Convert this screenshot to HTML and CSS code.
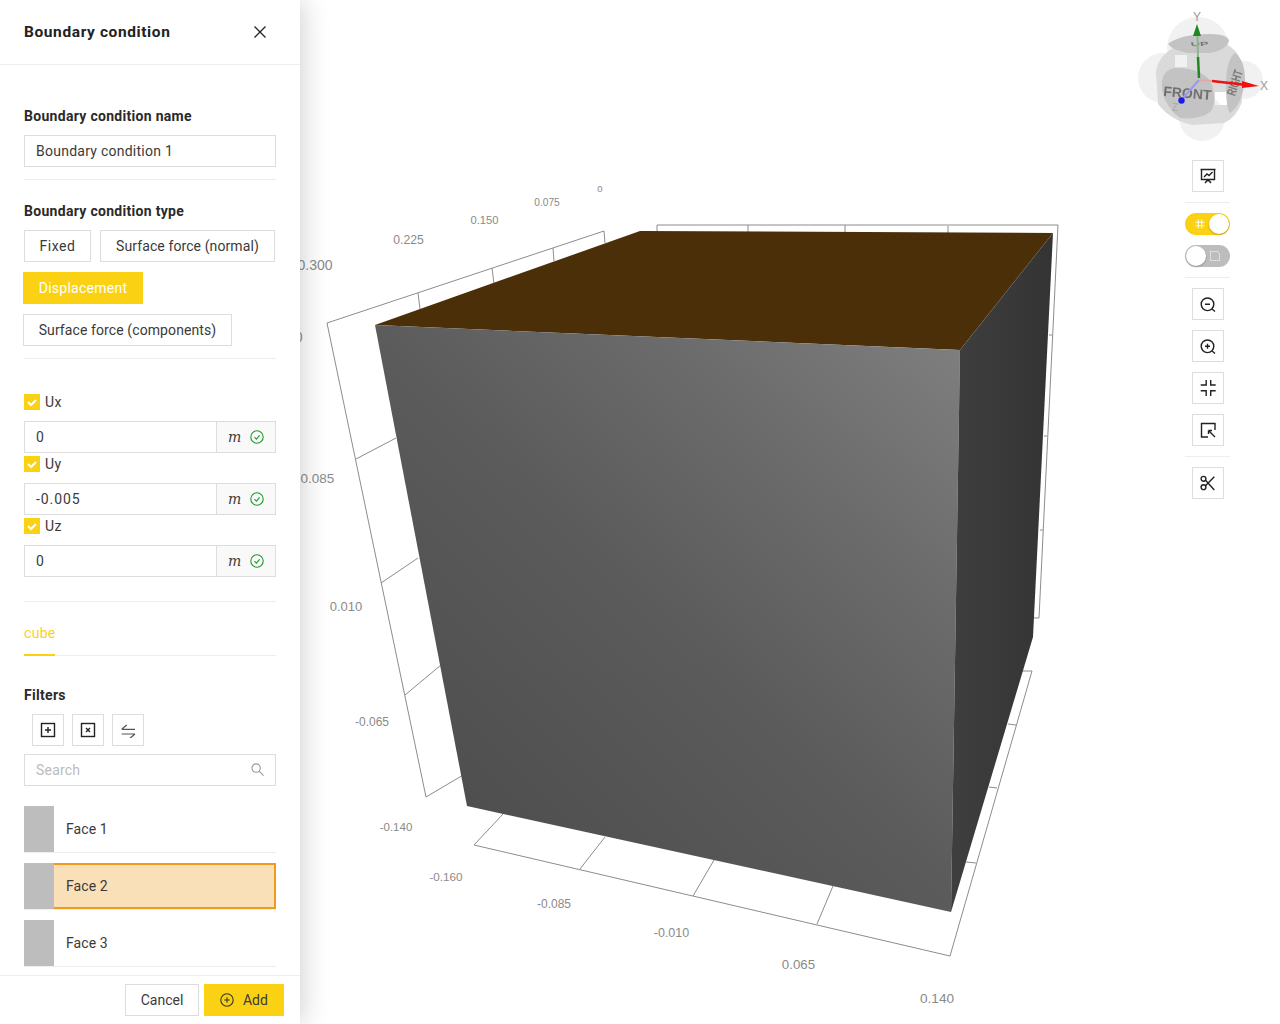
FILE: index.html
```html
<!DOCTYPE html>
<html lang="en">
<head>
  <meta charset="UTF-8">
  <meta name="viewport" content="width=device-width, initial-scale=1.0">
  <title>Boundary condition</title>
  <link rel="stylesheet" href="styles.css">
</head>
<body>
  <aside class="panel">
    <header class="panel-header">
      <h1>Boundary condition</h1>
      <svg class="close-icon" viewBox="0 0 12 12"><path d="M.5.5l11 11M11.500.5l-11 11"/></svg>
    </header>

    <div class="panel-body">
      <h2 class="label label-first">Boundary condition name</h2>
      <input class="text-input" type="text" value="Boundary condition 1">
      <hr class="divider">

      <h2 class="label">Boundary condition type</h2>
      <div class="type-row">
        <button class="btn btn-fixed">Fixed</button>
        <button class="btn btn-normal">Surface force (normal)</button>
      </div>
      <div class="type-row type-row-out">
        <button class="btn btn-primary btn-displacement">Displacement</button>
      </div>
      <div class="type-row type-row-out">
        <button class="btn btn-components">Surface force (components)</button>
      </div>
      <hr class="divider">

      <label class="check check-first">
        <span class="check-box"><svg viewBox="0 0 16 16"><path d="M4 8l3 3 5-5"/></svg></span>Ux
      </label>
      <div class="unit-input">
        <input type="text" value="0">
        <div class="unit"><i>m</i><svg viewBox="0 0 14 14"><circle cx="7" cy="7" r="6.200"/><path d="M4.500 7.200l1.900 1.900 3.200-3.700"/></svg></div>
      </div>
      <label class="check">
        <span class="check-box"><svg viewBox="0 0 16 16"><path d="M4 8l3 3 5-5"/></svg></span>Uy
      </label>
      <div class="unit-input">
        <input type="text" value="-0.005">
        <div class="unit"><i>m</i><svg viewBox="0 0 14 14"><circle cx="7" cy="7" r="6.200"/><path d="M4.500 7.200l1.900 1.900 3.200-3.700"/></svg></div>
      </div>
      <label class="check">
        <span class="check-box"><svg viewBox="0 0 16 16"><path d="M4 8l3 3 5-5"/></svg></span>Uz
      </label>
      <div class="unit-input">
        <input type="text" value="0">
        <div class="unit"><i>m</i><svg viewBox="0 0 14 14"><circle cx="7" cy="7" r="6.200"/><path d="M4.500 7.200l1.900 1.900 3.200-3.700"/></svg></div>
      </div>
      <hr class="divider divider-wide">

      <div class="tabs"><span class="tab">cube</span></div>

      <h2 class="label label-filters">Filters</h2>
      <div class="filter-btns">
        <button class="icon-btn"><svg viewBox="0 0 16 16"><rect x="1.500" y="1.500" width="13" height="13"/><path d="M8 5v6M5 8h6"/></svg></button>
        <button class="icon-btn"><svg viewBox="0 0 16 16"><rect x="1.500" y="1.500" width="13" height="13"/><path d="M6 6l4 4M10 6l-4 4"/></svg></button>
        <button class="icon-btn"><svg class="icon-soft" viewBox="0 0 16 16"><path d="M1.700 7.300H15M1.700 7.300L6.700 3M1.700 12H15M15 12l-5 4.300"/></svg></button>
      </div>
      <div class="search">
        <input type="text" placeholder="Search">
        <svg viewBox="0 0 14 14"><circle cx="5.500" cy="5.500" r="4.500"/><path d="M9 9l4.500 4.500"/></svg>
      </div>

      <ul class="faces">
        <li class="face"><span class="swatch"></span><span class="face-name">Face 1</span></li>
        <li class="face face-selected"><span class="swatch"></span><span class="face-name">Face 2</span></li>
        <li class="face"><span class="swatch"></span><span class="face-name">Face 3</span></li>
      </ul>
    </div>

    <footer class="panel-footer">
      <button class="btn btn-cancel">Cancel</button>
      <button class="btn btn-add">
        <svg viewBox="0 0 14 14"><circle cx="7" cy="7" r="6.200"/><path d="M7 4.200v5.600M4.200 7h5.600"/></svg>Add
      </button>
    </footer>
  </aside>

  <main class="viewport">
    <svg class="scene" viewBox="300 0 980 1024">
      <defs>
        <linearGradient id="front-face" gradientUnits="userSpaceOnUse" x1="960" y1="350" x2="500" y2="830">
          <stop offset="0" stop-color="#7e7e7e"/>
          <stop offset="0.3" stop-color="#6b6b6b"/>
          <stop offset="0.6" stop-color="#5b5b5b"/>
          <stop offset="1" stop-color="#4f4f4f"/>
        </linearGradient>
        <linearGradient id="right-face" gradientUnits="userSpaceOnUse" x1="955" y1="500" x2="1050" y2="500">
          <stop offset="0" stop-color="#3e3e3e"/>
          <stop offset="1" stop-color="#343434"/>
        </linearGradient>
      </defs>

      <!-- axis boxes -->
      <g class="grid">
        <path d="M605 243L604 231L327 323L426 797L475 768"/>
        <path d="M420 309L418 293M494 284L492 268M554 261L553 248"/>
        <path d="M356 459L396 438M381 583L418 558M405 695L441 665"/>
        <path d="M503 814L474 845L950 956L1032 671L1022 671"/>
        <path d="M580 869L605 837M693 896L714 860M817 924L833 886"/>
        <path d="M976 863L966 862M997 788L989 787M1016 725L1008 724"/>
        <path d="M657 232L657 225L1058 225L1039 618L1033 618"/>
        <path d="M748 225L748 232M845 225L845 232M948 226L948 233"/>
        <path d="M1049 335L1052 335M1044 436L1047 436M1040 530L1043 530"/>
      </g>

      <!-- cube -->
      <polygon points="375,325 640,231 1053,233 960,350" fill="#4a2f08"/>
      <polygon points="375,325 960,350 951,912 467,806" fill="url(#front-face)"/>
      <polygon points="960,350 1053,233 1033,637 951,912" fill="url(#right-face)"/>

      <g class="tick-labels">
        <text x="600" y="192" font-size="9.500">0</text>
        <text x="547" y="206" font-size="10.200">0.075</text>
        <text x="484.500" y="224" font-size="11.200">0.150</text>
        <text x="408.500" y="244" font-size="12.200">0.225</text>
        <text x="315" y="270" font-size="14">0.300</text>
        <text x="285" y="342" font-size="14">0.160</text>
        <text x="317.500" y="483" font-size="13.500">0.085</text>
        <text x="346" y="611" font-size="13">0.010</text>
        <text x="372" y="726" font-size="12">-0.065</text>
        <text x="396" y="831" font-size="11.500">-0.140</text>
        <text x="446" y="881" font-size="11.700">-0.160</text>
        <text x="554" y="908" font-size="12">-0.085</text>
        <text x="671.500" y="937" font-size="12.500">-0.010</text>
        <text x="798.500" y="969" font-size="13.300">0.065</text>
        <text x="937" y="1003" font-size="13.600">0.140</text>
      </g>
    </svg>

    <!-- orientation cube, coordinates are the gizmo's own -->
    <svg class="gizmo" viewBox="0 0 160 150">
      <defs>
        <filter id="soft"><feGaussianBlur stdDeviation="0.400"/></filter>
      </defs>
      <g class="gizmo-halo">
        <circle cx="78" cy="48" r="31"/>
        <circle cx="43" cy="78" r="25"/>
        <circle cx="124" cy="80" r="19"/>
        <circle cx="82" cy="118" r="23"/>
      </g>
      <g filter="url(#soft)">
        <path class="gizmo-body" fill-rule="evenodd" d="M36 72Q38 52 66 42L106 44Q118 50 121 62L122 102Q116 118 104 123L72 125Q50 120 38 104ZM55 55L67 55L67 67L55 67ZM95 92L107 92L107 105L95 105Z"/>
        <path class="gizmo-face" d="M48 44Q60 34 90 34Q108 34 109 41Q106 50 90 53L68 53Q52 50 48 44Z"/>
        <path class="gizmo-face" d="M55 68Q85 68 92 85Q97 105 90 112Q80 120 60 118Q46 108 42 90Q40 70 55 68Z"/>
        <path class="gizmo-face" d="M115 53Q125 60 125 80Q122 105 110 113Q106 108 106 85Q106 60 115 53Z"/>
        <text class="gizmo-small" transform="translate(80 46) scale(1 .45) rotate(-4)" text-anchor="middle">UP</text>
        <text class="gizmo-small" transform="translate(119 84) rotate(-72) scale(.65 1)" text-anchor="middle">RIGHT</text>
        <text class="gizmo-front" transform="translate(67 98) rotate(5)" text-anchor="middle">FRONT</text>
      </g>
      <path class="axis-fade" d="M78 57L77.500 36" stroke="#8fb58f"/>
      <path class="axis" d="M79 78L78 57" stroke="#1e8a1e"/>
      <polygon points="77,24 73,36 81,36" fill="#1e8a1e"/>
      <path class="axis-fade" d="M80 80L92 81" stroke="#e5a8a8"/>
      <path class="axis" d="M92 81L127 85" stroke="#f01010"/>
      <polygon points="139,86 122,81 122,88" fill="#f01010"/>
      <path class="axis-fade" d="M79 80L63 98" stroke="#9a9ae8"/>
      <circle cx="61.500" cy="100.500" r="3.200" fill="#1a1aee"/>
      <text class="gizmo-axis" x="77" y="21" text-anchor="middle">Y</text>
      <text class="gizmo-axis" x="144" y="90" text-anchor="middle">X</text>
      <text class="gizmo-z" x="55" y="111" text-anchor="middle">Z</text>
    </svg>

    <div class="toolbar">
      <button class="icon-btn"><svg viewBox="0 0 16 16"><path d="M.5 1.500h15M1.500 1.500v10h13v-10"/><path d="M4 9l3-3 2 1.500 3.500-3.500M8 11.500v2M8 11.500L5 15M8 11.500l3 3.500"/></svg></button>
      <hr class="tool-divider">
      <div class="toggle toggle-on">
        <svg viewBox="0 0 10 10"><path d="M3.300 .5v9M6.700 .5v9M.5 3.300h9M.5 6.700h9"/></svg>
        <span class="knob"></span>
      </div>
      <div class="toggle toggle-off">
        <span class="knob"></span>
        <svg viewBox="0 0 10 10"><path stroke-dasharray="1 1" d="M.5 .5h7l2 2v7h-9z"/></svg>
      </div>
      <hr class="tool-divider">
      <button class="icon-btn"><svg viewBox="0 0 16 16"><circle cx="7.500" cy="8.300" r="6.300"/><path d="M12 13l3 2.500M5 8.300h5"/></svg></button>
      <button class="icon-btn"><svg viewBox="0 0 16 16"><circle cx="7.500" cy="8.300" r="6.300"/><path d="M12 13l3 2.500M5 8.300h5M7.500 5.800v5"/></svg></button>
      <button class="icon-btn"><svg viewBox="0 0 16 16"><path d="M.7 5h5.500V0M15.700 5h-5V0M.7 10.700h5.500V16M15.700 10.700h-5V16"/></svg></button>
      <button class="icon-btn"><svg viewBox="0 0 16 16"><path d="M8 15H1.500V1.500H15V8"/><path d="M8.500 8.500l6.500 6.500M8.500 8.500h3.500M8.500 8.500V12"/></svg></button>
      <hr class="tool-divider">
      <button class="icon-btn"><svg viewBox="0 0 16 16"><circle cx="3.500" cy="3.800" r="2.400"/><circle cx="3.500" cy="12.200" r="2.400"/><path d="M5.500 5.300L14.300 15M5.500 10.700L14.300 1.700"/></svg></button>
    </div>
  </main>
</body>
</html>
```

FILE: styles.css
```css
* {
  box-sizing: border-box;
}

body {
  margin: 0;
  height: 1024px;
  display: flex;
  overflow: hidden;
  font-family: Roboto, Arial, sans-serif;
  font-size: 14px;
  color: #3a3a3a;
  background-color: white;
}

h1, h2 {
  margin: 0;
}

button, input {
  font-family: inherit;
  font-size: 14px;
  color: #3a3a3a;
}

/* Side panel */
.panel {
  position: relative;
  z-index: 2;
  width: 300px;
  flex-shrink: 0;
  display: flex;
  flex-direction: column;
  background-color: white;
  box-shadow: 0 0 28px rgba(0, 0, 0, 0.22);
}

.panel-header {
  height: 65px;
  flex-shrink: 0;
  display: flex;
  justify-content: space-between;
  align-items: center;
  padding: 0 34px 0 24px;
  border-bottom: 1px solid #eee;
}

.panel-header h1 {
  font-size: 15.500px;
  font-weight: 700;
  letter-spacing: 0.6px;
  color: #222;
}

.close-icon {
  width: 12px;
  height: 12px;
  fill: none;
  stroke: #222;
  stroke-width: 1.300;
}

.panel-body {
  flex: 1;
  padding: 0 24px;
  overflow: hidden;
}

.label {
  font-size: 14px;
  line-height: 20px;
  font-weight: 700;
  letter-spacing: 0.3px;
  color: #2a2a2a;
  margin-bottom: 9px;
}

.label-first {
  margin-top: 41px;
}

.text-input {
  display: block;
  width: 100%;
  height: 32px;
  padding: 0 11px;
  border: 1px solid #ddd;
  outline: none;
  letter-spacing: 0.25px;
}

.divider {
  height: 1px;
  margin: 12px 0 21px;
  border: none;
  background-color: #eee;
}

.divider-wide {
  margin: 24px 0 0;
}

/* Buttons */
.btn {
  height: 32px;
  padding: 0;
  border: 1px solid #ddd;
  background-color: white;
  letter-spacing: 0.1px;
}

.btn-primary {
  border-color: #fbd213;
  background-color: #fbd213;
  color: white;
  letter-spacing: 0.25px;
}

.type-row {
  display: flex;
  gap: 9px;
  margin-bottom: 10px;
}

.type-row-out {
  margin-left: -1px;
}

.btn-fixed { width: 67px; letter-spacing: 0.5px; }
.btn-normal { width: 175px; }
.btn-displacement { width: 120px; }
.btn-components { width: 209px; }

/* Checkboxes and unit fields */
.check {
  display: flex;
  align-items: center;
  gap: 5px;
  height: 16px;
  margin: 3px 0 11px;
  letter-spacing: 0.5px;
}

.check-first {
  margin-top: 35px;
}

.check-box {
  width: 16px;
  height: 16px;
  background-color: #fbd213;
}

.check-box svg {
  display: block;
  fill: none;
  stroke: white;
  stroke-width: 2;
}

.unit-input {
  display: flex;
  height: 32px;
  border: 1px solid #ddd;
}

.unit-input input {
  flex: 1;
  min-width: 0;
  padding: 0 11px;
  border: none;
  outline: none;
  letter-spacing: 0.9px;
}

.unit {
  width: 59px;
  display: flex;
  align-items: center;
  gap: 7px;
  padding-left: 11px;
  border-left: 1px solid #ddd;
  background-color: #f9f9f9;
}

.unit i {
  font-family: "DejaVu Serif", serif;
  font-size: 14px;
  width: 15px;
}

.unit svg {
  width: 14px;
  height: 14px;
  fill: none;
  stroke: #1d9a2d;
  stroke-width: 1.100;
}

/* Tabs */
.tabs {
  height: 54px;
  padding-top: 20px;
  border-bottom: 1px solid #eee;
}

.tab {
  display: inline-block;
  height: 34px;
  line-height: 22px;
  width: 31px;
  border-bottom: 2px solid #fbd213;
  color: #fbd213;
  letter-spacing: 0.3px;
}

.label-filters {
  margin-top: 29px;
}

.icon-btn {
  width: 32px;
  height: 32px;
  padding: 7px;
  display: block;
  border: 1px solid #ddd;
  background-color: white;
}

.icon-btn svg {
  display: block;
  width: 16px;
  height: 16px;
  fill: none;
  stroke: #222;
  stroke-width: 1.400;
}

.icon-btn .icon-soft {
  stroke: #555;
  stroke-width: 1.200;
}

.filter-btns {
  display: flex;
  gap: 8px;
  margin: 0 0 8px 8px;
}

.search {
  position: relative;
  height: 32px;
}

.search input {
  width: 100%;
  height: 32px;
  padding: 0 11px;
  border: 1px solid #ddd;
  outline: none;
  letter-spacing: 0.2px;
}

.search input::placeholder {
  color: #bbb;
}

.search svg {
  position: absolute;
  top: 9px;
  right: 12px;
  width: 13px;
  height: 13px;
  fill: none;
  stroke: #999;
  stroke-width: 1.200;
}

/* Face list */
.faces {
  list-style: none;
  margin: 20px 0 0;
  padding: 0;
}

.face {
  display: flex;
  height: 47px;
  margin-bottom: 10px;
  border-bottom: 1px solid #eee;
  letter-spacing: 0.1px;
}

.swatch {
  width: 30px;
  flex-shrink: 0;
  background-color: #bdbdbd;
}

.face-name {
  flex: 1;
  display: flex;
  align-items: center;
  padding-left: 12px;
}

.face-selected .face-name {
  padding-left: 12px;
  background-color: #fae0b8;
  border: 2px solid #f09a1e;
  border-left: none;
}

/* Footer */
.panel-footer {
  height: 49px;
  flex-shrink: 0;
  display: flex;
  justify-content: flex-end;
  gap: 5px;
  padding: 8px 16px;
  border-top: 1px solid #eee;
}

.btn-cancel {
  width: 74px;
  letter-spacing: 0;
}

.btn-add {
  width: 80px;
  display: flex;
  align-items: center;
  justify-content: center;
  gap: 9px;
  border-color: #fbd213;
  background-color: #fbd213;
}

.btn-add svg {
  width: 14px;
  height: 14px;
  fill: none;
  stroke: #333;
  stroke-width: 1.100;
}

/* 3D view */
.viewport {
  position: relative;
  flex: 1;
}

.scene {
  display: block;
  width: 980px;
  height: 1024px;
}

.grid path {
  fill: none;
  stroke: #8c8c8c;
  stroke-width: 1;
}

.tick-labels text {
  font-family: "Liberation Sans", Arial, sans-serif;
  fill: #8a8a8a;
  text-anchor: middle;
}

/* Orientation gizmo */
.gizmo {
  position: absolute;
  top: 0;
  right: 0;
  width: 160px;
  height: 150px;
}

.gizmo-halo circle {
  fill: #f1f1f1;
}

.gizmo-body {
  fill: #dadada;
}

.gizmo-face {
  fill: #c3c3c3;
}

.gizmo-front {
  font-family: "Liberation Sans", Arial, sans-serif;
  font-size: 14px;
  font-weight: 700;
  fill: #707070;
}

.gizmo-small {
  font-family: "Liberation Sans", Arial, sans-serif;
  font-size: 13px;
  font-weight: 700;
  fill: #777;
}

.axis {
  fill: none;
  stroke-width: 2.500;
}

.axis-fade {
  fill: none;
  stroke-width: 2;
}

.gizmo-axis {
  font-family: "Liberation Sans", Arial, sans-serif;
  font-size: 12px;
  fill: #999;
}

.gizmo-z {
  font-family: "Liberation Sans", Arial, sans-serif;
  font-size: 10px;
  fill: #aaa;
}

/* Right toolbar */
.toolbar {
  position: absolute;
  top: 160px;
  left: 885px;
  width: 45px;
  display: flex;
  flex-direction: column;
  align-items: center;
  gap: 10px;
}

.toolbar .icon-btn {
  margin-left: 1px;
  margin-right: 0;
}

.tool-divider {
  width: 45px;
  height: 1px;
  margin: 0;
  border: none;
  background-color: #eee;
}

.toggle {
  position: relative;
  width: 45px;
  height: 22px;
  display: flex;
  align-items: center;
  border-radius: 11px;
}

.toggle svg {
  width: 10px;
  height: 10px;
  fill: none;
  stroke: white;
  stroke-width: 1;
}

.toggle-on {
  justify-content: space-between;
  padding: 0 1px 0 10px;
  background-color: #fbd213;
}

.toggle-off {
  justify-content: space-between;
  padding: 0 10px 0 1px;
  background-color: #bdbdbd;
}

.knob {
  width: 20px;
  height: 20px;
  border-radius: 50%;
  background-color: white;
  box-shadow: 0 1px 2px rgba(0, 0, 0, 0.25);
}
```
